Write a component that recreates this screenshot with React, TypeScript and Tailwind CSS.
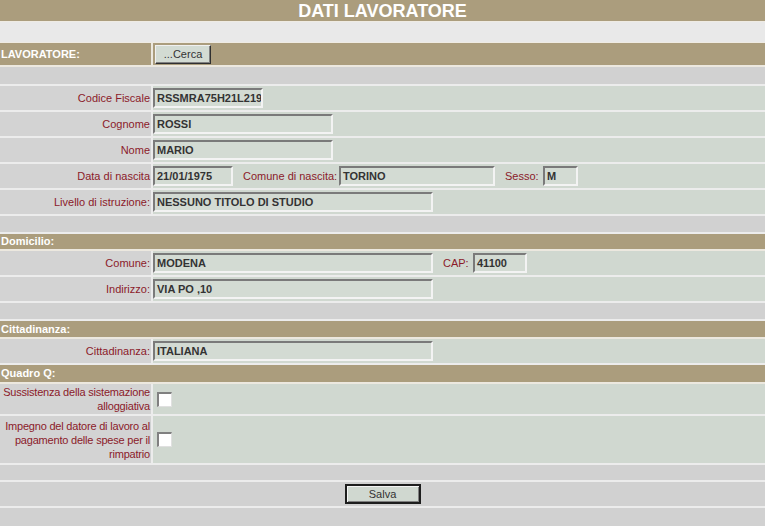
import React from "react";

const font = { fontFamily: '"Liberation Sans", Arial, sans-serif' };

function Field({ w, children }: { w: string; children?: React.ReactNode }) {
  return (
    <div
      className={`${w} h-[20px] border-2 border-t-[#7a7a7a] border-l-[#7a7a7a] border-r-[#f3f3f3] border-b-[#f3f3f3] bg-[#d3dbd3] pl-[2px] font-bold text-[#333333] flex items-center overflow-hidden whitespace-nowrap`}
    >
      {children}
    </div>
  );
}

function Row({
  label,
  h,
  children,
}: {
  label: React.ReactNode;
  h: string;
  children?: React.ReactNode;
}) {
  return (
    <div className={`flex ${h} border-b-2 border-[#ececec]`}>
      <div className="w-[153px] shrink-0 bg-[#d3d3d3] border-r-2 border-[#ececec] flex items-center justify-end text-right text-[#8b1a2a] leading-[14px] pr-[1px] whitespace-nowrap">
        {label}
      </div>
      <div className="flex-1 bg-[#d0d8d0] flex items-center">{children}</div>
    </div>
  );
}

function Header({ h, children }: { h: string; children: React.ReactNode }) {
  return (
    <div className={`${h} bg-[#ab9d7d] border-b-2 border-[#ece8df] flex items-center pl-[1px] font-bold text-white`}>
      {children}
    </div>
  );
}

function Empty({ h }: { h: string }) {
  return <div className={`${h} bg-[#d1d1d1] border-b-2 border-[#ececec]`} />;
}

function Check() {
  return (
    <div className="ml-[4px] w-[15px] h-[15px] bg-white border-t-2 border-l-2 border-t-[#808080] border-l-[#808080] border-r border-b border-r-[#e0e0e0] border-b-[#e0e0e0]" />
  );
}

export default function App() {
  return (
    <div className="w-[765px] h-[526px] bg-[#d1d1d1] text-[11px] overflow-hidden" style={font}>
      <div className="h-[22px] bg-[#ab9d7d] border-b border-[#efebe3] flex items-center justify-center text-white font-bold text-[18px] leading-none">
        DATI LAVORATORE
      </div>
      <div className="h-[21px] bg-[#e9e9e9] border-b border-[#efebe3]" />
      <div className="flex h-[24px] border-b-2 border-[#ece8df]">
        <div className="w-[153px] shrink-0 bg-[#ab9d7d] border-r-2 border-[#ece8df] flex items-center pl-[1px] font-bold text-white">
          LAVORATORE:
        </div>
        <div className="flex-1 bg-[#ab9d7d] flex items-center">
          <div className="ml-[2px] w-[56px] h-[19px] bg-[#d3dbd3] border border-t-[#f0f0f0] border-l-[#f0f0f0] border-r-[#303030] border-b-[#303030] shadow-[inset_-1px_-1px_0_#808080] flex items-center justify-center text-[#333333]">
            ...Cerca
          </div>
        </div>
      </div>
      <Empty h="h-[19px]" />
      <Row label="Codice Fiscale" h="h-[26px]">
        <Field w="w-[110px]">RSSMRA75H21L219H</Field>
      </Row>
      <Row label="Cognome" h="h-[26px]">
        <Field w="w-[180px]">ROSSI</Field>
      </Row>
      <Row label="Nome" h="h-[26px]">
        <Field w="w-[180px]">MARIO</Field>
      </Row>
      <Row label="Data di nascita" h="h-[26px]">
        <Field w="w-[80px]">21/01/1975</Field>
        <div className="w-[106px] pl-[10px] text-[#8b1a2a] whitespace-nowrap">Comune di nascita:</div>
        <Field w="w-[156px]">TORINO</Field>
        <div className="w-[48px] pl-[10px] text-[#8b1a2a]">Sesso:</div>
        <Field w="w-[35px]">M</Field>
      </Row>
      <Row label="Livello di istruzione:" h="h-[26px]">
        <Field w="w-[280px]">NESSUNO TITOLO DI STUDIO</Field>
      </Row>
      <Empty h="h-[18px]" />
      <Header h="h-[17px]">Domicilio:</Header>
      <Row label="Comune:" h="h-[26px]">
        <Field w="w-[280px]">MODENA</Field>
        <div className="w-[40px] pl-[10px] text-[#8b1a2a]">CAP:</div>
        <Field w="w-[54px]">41100</Field>
      </Row>
      <Row label="Indirizzo:" h="h-[26px]">
        <Field w="w-[280px]">VIA PO ,10</Field>
      </Row>
      <Empty h="h-[18px]" />
      <Header h="h-[18px]">Cittadinanza:</Header>
      <Row label="Cittadinanza:" h="h-[26px]">
        <Field w="w-[280px]">ITALIANA</Field>
      </Row>
      <Header h="h-[19px]">Quadro Q:</Header>
      <Row
        label={
          <span className="tracking-[-0.2px]">
            Sussistenza della sistemazione
            <br />
            alloggiativa
          </span>
        }
        h="h-[32px]"
      >
        <Check />
      </Row>
      <Row
        label={
          <span className="tracking-[-0.2px]">
            Impegno del datore di lavoro al
            <br />
            pagamento delle spese per il
            <br />
            rimpatrio
          </span>
        }
        h="h-[49px]"
      >
        <Check />
      </Row>
      <Empty h="h-[17px]" />
      <div className="h-[26px] bg-[#d1d1d1] border-b-2 border-[#ececec] flex items-center justify-center">
        <div className="w-[76px] h-[20px] bg-[#d0d8d0] border-2 border-[#1e1e1e] shadow-[inset_1px_1px_0_#f4f4f4,inset_-1px_-1px_0_#808080] flex items-center justify-center text-[#333333]">
          Salva
        </div>
      </div>
      <div className="h-[18px] bg-[#d1d1d1]" />
    </div>
  );
}
